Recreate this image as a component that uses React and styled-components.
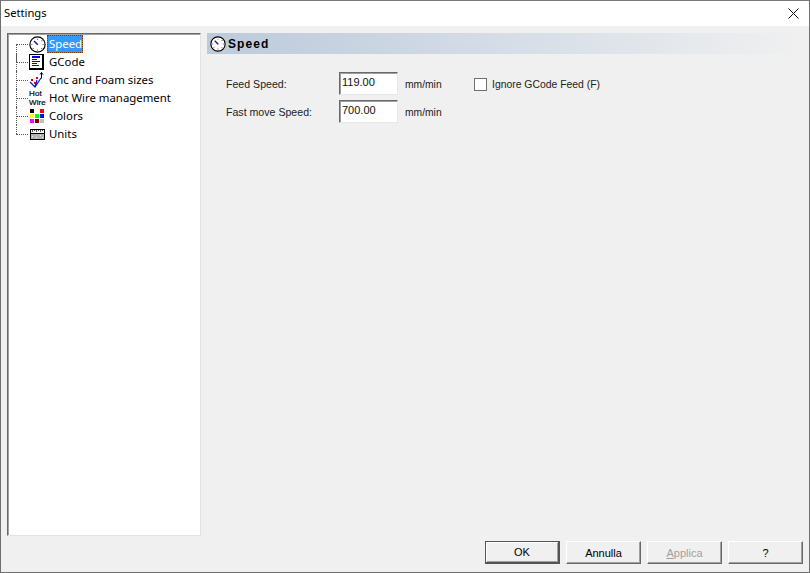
import React from "react";
import styled, { createGlobalStyle, css } from "styled-components";

const Global = createGlobalStyle`
  html, body { margin: 0; padding: 0; background: #f0f0f0; }
  * { box-sizing: border-box; }
`;

const sans = `"Liberation Sans", Arial, sans-serif`;
const ui = `"Noto Sans", "Open Sans", sans-serif`;

const Window = styled.div`
  width: 810px; height: 573px; display: flex; flex-direction: column;
  background: #f0f0f0; border: 1px solid #6f6f6f; border-top-color: #7a7a7a; font-family: ${sans};
  overflow: hidden;
`;
const TitleBar = styled.div`
  height: 25px; flex: none; background: #fff; display: flex; align-items: center;
  justify-content: space-between; padding: 0 10px 0 3px;
`;
const TitleText = styled.span`
  font-family: ${ui}; font-size: 11.2px; color: #000; position: relative; top: -1px;
`;
const CloseIcon = styled.svg`width: 11px; height: 11px; display: block;`;
const Main = styled.div`
  flex: 1; display: flex; gap: 6px; padding: 7px 7px 0 6px; min-height: 0;
`;
const Tree = styled.div`
  width: 194px; height: 503px; flex: none; background: #fff;
  border: 1px solid; border-color: #696969 #e3e3e3 #e3e3e3 #696969;
  box-shadow: inset 1px 1px 0 #a0a0a0;
  padding: 1px 0 0 2px; display: flex; flex-direction: column; position: relative;
`;
const Row = styled.div`
  height: 18px; display: flex; align-items: center; padding-left: 18px; position: relative;
  &::before {
    content: ""; position: absolute; left: 6px; top: 9px; width: 12px;
    border-top: 1px dotted #555;
  }
  &::after {
    content: ""; position: absolute; left: 6px; top: ${p => (p.$first ? "9px" : "0")};
    height: ${p => (p.$last ? "9px" : "18px")};
    border-left: 1px dotted #555;
  }
`;
const IconSlot = styled.div`
  width: 18px; height: 18px; flex: none; display: flex; align-items: center; justify-content: center;
  position: relative; z-index: 1;
`;
const Label = styled.span`
  font-family: ${ui}; font-size: 11.4px; line-height: 17px; height: 18px; padding: 0 1px 0 2px; margin-left: 1px;
  color: #000; white-space: nowrap;
  ${p => p.$selected && css`
    background: #3399ff; color: #fff; outline: 1px dotted #7a3b00; outline-offset: -1px;
  `}
`;
const Panel = styled.div`flex: 1; display: flex; flex-direction: column; min-width: 0;`;
const Header = styled.div`
  height: 21px; flex: none; display: flex; align-items: center; gap: 2px; padding-left: 3px;
  background: linear-gradient(90deg, #bccadb 0%, #d5dde7 50%, #f0f0f0 100%);
  font-family: ${sans}; font-weight: 700; font-size: 12px; letter-spacing: 1.1px; color: #000;
`;
const Form = styled.div`
  margin-top: 18px; padding-left: 19px; display: flex; flex-direction: column; gap: 6px;
`;
const FormRow = styled.div`display: flex; align-items: center; height: 22px;`;
const FieldLabel = styled.span`
  width: 113px; font-size: 10.6px; color: #222; position: relative; top: 1px; flex: none;
`;
const Input = styled.div`
  width: 59px; height: 23px; background: #fff; font-size: 11px; color: #111; padding: 2px 0 0 2px; line-height: 15px;
  border: 1px solid; border-color: #696969 #e8e8e8 #e8e8e8 #696969;
  box-shadow: inset 1px 1px 0 #a0a0a0; flex: none;
`;
const Unit = styled.span`
  margin-left: 7px; width: 69px; font-size: 10.3px; color: #222; position: relative; top: 1px; flex: none;
`;
const CheckBox = styled.span`
  width: 13px; height: 13px; border: 1px solid #707070; background: #fff; flex: none; position: relative; top: 1px;
`;
const CheckLabel = styled.span`
  margin-left: 5px; font-size: 10.4px; color: #222; position: relative; top: 1px;
`;
const Footer = styled.div`
  height: 38px; flex: none; display: flex; justify-content: flex-end; gap: 6px; padding: 7px 6px 0 0;
`;
const Button = styled.div`
  width: 75px; height: 23px; display: flex; align-items: center; justify-content: center;
  background: #f0f0f0; font-size: 11px; color: ${p => (p.$disabled ? "#a0a0a0" : "#000")};
  border: 1px solid; border-color: #fff #696969 #696969 #fff;
  box-shadow: inset -1px -1px 0 #a0a0a0;
  ${p => p.$default && css`
    border-color: #555; border-width: 1px 2px 2px 1px;
    box-shadow: inset 1px 1px 0 #fff, inset -1px -1px 0 #a0a0a0;
  `}
  u { text-decoration-thickness: 1px; }
`;
const HotWire = styled.div`
  font-family: ${sans}; font-size: 8px; line-height: 9px; text-align: left; color: #000;
  letter-spacing: 0.1px; -webkit-text-stroke: 0.2px #000; width: 16px;
`;

const Gauge = ({ size = 17 }) => (
  <svg width={size} height={size} viewBox="0 0 17 17">
    <circle cx="8.5" cy="8.5" r="7.6" fill="#fff" stroke="#000" strokeWidth="1.2" />
    <path d="M5 5 L8.8 8.8" stroke="#1a1a9b" strokeWidth="1.5" />
    <path d="M8 2.8h1v1H8zM12.4 4.2h1v1h-1zM13.6 8h1v1h-1zM12.2 12h1v1h-1zM8 13.4h1v1H8zM3.6 12h1v1h-1zM2.4 8h1v1h-1z" fill="#555" />
  </svg>
);
const DocIcon = () => (
  <svg width="16" height="16" viewBox="0 0 16 16" shapeRendering="crispEdges">
    <rect x="0" y="0" width="15" height="16" fill="#000" />
    <rect x="1" y="1" width="12" height="13" fill="#fff" />
    <path d="M3 2h8v2H3zM3 5h5v1H3zM3 7h8v1H3zM3 9h5v1H3zM3 11h7v1H3z" fill="#0000ff" />
  </svg>
);
const AxisIcon = () => (
  <svg width="16" height="17" viewBox="0 0 16 17">
    <path d="M1 10 L6 15 L12 6 M6 15 L8 8" stroke="#1010d0" strokeWidth="1.2" fill="none" />
    <path d="M12.5 0.5v6M11 2.5l1.5-2 1.5 2" stroke="#000" strokeWidth="1" fill="none" />
    <path d="M2 7h2v2H2zM7 5h2v2H7zM5 10h2v2H5z" fill="#e00000" shapeRendering="crispEdges" />
  </svg>
);
const Swatches = () => {
  const c = ["#000", "#fff", "#f00", "#ff0", "#0f0", "#00f", "#f0f", "#800000", "#c0c0c0"];
  return (
    <svg width="14" height="14" viewBox="0 0 14 14" shapeRendering="crispEdges">
      {c.map((f, i) => (
        <rect key={i} x={(i % 3) * 5} y={Math.floor(i / 3) * 5} width="4" height="4" fill={f} />
      ))}
    </svg>
  );
};
const RulerIcon = () => (
  <svg width="15" height="11" viewBox="0 0 15 11" shapeRendering="crispEdges">
    <rect x="0" y="0" width="15" height="11" fill="#000" />
    <rect x="1" y="1" width="13" height="3" fill="#f4f4f4" />
    <rect x="1" y="5" width="13" height="5" fill="#b4b4b4" />
    <path d="M2.5 1v2M4.5 1v1M6.5 1v2M8.5 1v1M10.5 1v2M12.5 1v1" stroke="#555" />
    <path d="M2 7h1v1H2zM6 8h1v1H6zM10 6h1v1h-1zM12 8h1v1h-1z" fill="#eee" />
  </svg>
);

const items = [
  { label: "Speed", icon: <Gauge />, selected: true },
  { label: "GCode", icon: <DocIcon /> },
  { label: "Cnc and Foam sizes", icon: <AxisIcon /> },
  { label: "Hot Wire management", icon: <HotWire>Hot<br />Wire</HotWire> },
  { label: "Colors", icon: <Swatches /> },
  { label: "Units", icon: <RulerIcon /> },
];

export default function App() {
  return (
    <Window>
      <Global />
      <TitleBar>
        <TitleText>Settings</TitleText>
        <CloseIcon viewBox="0 0 11 11">
          <path d="M0.5 0.5L10.5 10.5M10.5 0.5L0.5 10.5" stroke="#111" strokeWidth="1" fill="none" />
        </CloseIcon>
      </TitleBar>
      <Main>
        <Tree>
          {items.map((it, i) => (
            <Row key={it.label} $first={i === 0} $last={i === items.length - 1}>
              <IconSlot>{it.icon}</IconSlot>
              <Label $selected={it.selected}>{it.label}</Label>
            </Row>
          ))}
        </Tree>
        <Panel>
          <Header><Gauge size={16} />Speed</Header>
          <Form>
            <FormRow>
              <FieldLabel>Feed Speed:</FieldLabel>
              <Input>119.00</Input>
              <Unit>mm/min</Unit>
              <CheckBox />
              <CheckLabel>Ignore GCode Feed (F)</CheckLabel>
            </FormRow>
            <FormRow>
              <FieldLabel>Fast move Speed:</FieldLabel>
              <Input>700.00</Input>
              <Unit>mm/min</Unit>
            </FormRow>
          </Form>
        </Panel>
      </Main>
      <Footer>
        <Button $default>OK</Button>
        <Button>Annulla</Button>
        <Button $disabled><span><u>A</u>pplica</span></Button>
        <Button>?</Button>
      </Footer>
    </Window>
  );
}
